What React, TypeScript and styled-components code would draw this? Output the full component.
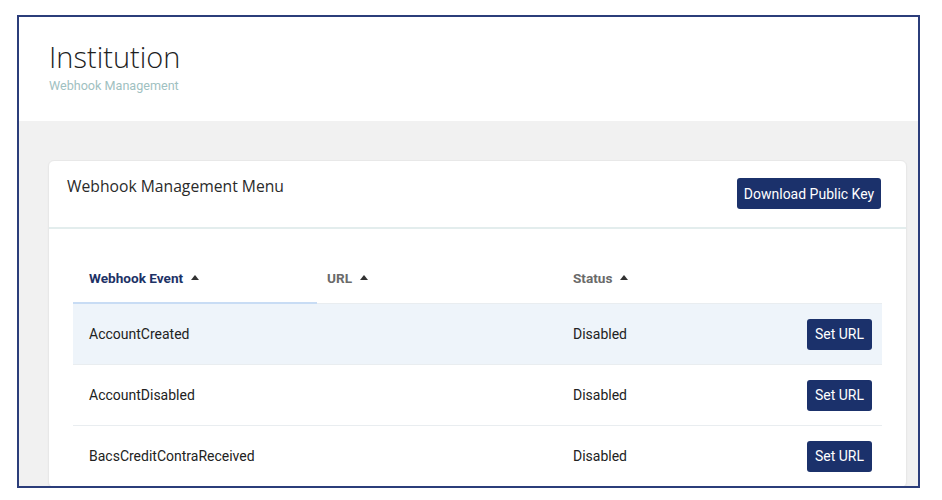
import React from "react";
import styled, { createGlobalStyle } from "styled-components";

const Global = createGlobalStyle`
  html, body { margin: 0; padding: 0; background: #ffffff; }
  body { font-family: Roboto, "Liberation Sans", Arial, sans-serif; }
  * { box-sizing: border-box; }
`;

const Frame = styled.div`
  margin: 15px 0 0 17px;
  width: 903px;
  height: 473px;
  border: 2px solid #2b3d7a;
  overflow: hidden;
  display: flex;
  flex-direction: column;
  background: #f1f1f1;
`;

const Header = styled.header`
  background: #ffffff;
  height: 104px;
  padding: 22px 0 0 30px;
  flex-shrink: 0;
`;

const Title = styled.h1`
  margin: 0;
  font-family: "Open Sans", sans-serif;
  font-weight: 300;
  font-size: 29px;
  line-height: 36px;
  color: #1f1f1f;
`;

const Subtitle = styled.div`
  margin-top: 3px;
  font-family: Roboto, sans-serif;
  font-size: 12.6px;
  color: #9fc1c1;
`;

const Content = styled.main`
  flex: 1;
  padding: 39px 11px 0 29px;
`;

const Card = styled.section`
  background: #ffffff;
  border-radius: 6px;
  border: 1px solid #e8e8e8;
  box-shadow: 0 1px 2px rgba(0, 0, 0, 0.04);
`;

const CardHeader = styled.div`
  display: flex;
  justify-content: space-between;
  align-items: flex-start;
  padding: 17px 25px 17px 18px;
  border-bottom: 2px solid #e3eded;
  height: 68px;
`;

const CardTitle = styled.h2`
  margin: 0;
  margin-top: -1px;
  font-family: "Open Sans", sans-serif;
  font-weight: 400;
  font-size: 15.7px;
  line-height: 18px;
  color: #2a2a2a;
`;

const NavyButton = styled.button<{ $w?: number }>`
  height: 31px;
  padding: 0 ${(p) => (p.$w ? 0 : 9)}px;
  width: ${(p) => (p.$w ? `${p.$w}px` : "auto")};
  border: none;
  border-radius: 3px;
  background: #1b316b;
  color: #ffffff;
  font-family: Roboto, sans-serif;
  font-size: 14px;
  cursor: pointer;
`;

const TableWrap = styled.div`
  padding: 24px 24px 0 24px;
`;

const Row = styled.div<{ $head?: boolean; $highlight?: boolean }>`
  display: grid;
  grid-template-columns: 244px 246px 1fr auto;
  align-items: center;
  height: ${(p) => (p.$head ? 51 : 61)}px;
  background: ${(p) => (p.$highlight ? "#eef4fa" : "transparent")};
  border-bottom: 1px solid #e9edf0;
`;

const HeadCell = styled.div<{ $active?: boolean; $first?: boolean }>`
  height: 100%;
  display: flex;
  align-items: center;
  gap: 8px;
  padding-left: ${(p) => (p.$first ? 16 : 10)}px;
  padding-top: 1px;
  font-family: Roboto, sans-serif;
  font-weight: 700;
  font-size: 13.6px;
  color: ${(p) => (p.$active ? "#1d3266" : "#6a6a6a")};
  border-bottom: 2px solid ${(p) => (p.$active ? "#c8dcf4" : "transparent")};
  margin-bottom: -1px;
`;

const SortArrow = styled.span`
  width: 0;
  height: 0;
  border-left: 4px solid transparent;
  border-right: 4px solid transparent;
  border-bottom: 5px solid #333;
  margin-top: -1px;
`;

const Cell = styled.div<{ $first?: boolean; $right?: boolean }>`
  padding-left: ${(p) => (p.$first ? 16 : 10)}px;
  padding-right: ${(p) => (p.$right ? 10 : 0)}px;
  font-family: Roboto, sans-serif;
  font-size: 14px;
  color: #222222;
  display: flex;
  justify-content: ${(p) => (p.$right ? "flex-end" : "flex-start")};
`;

const events = [
  { name: "AccountCreated", status: "Disabled" },
  { name: "AccountDisabled", status: "Disabled" },
  { name: "BacsCreditContraReceived", status: "Disabled" },
];

export default function App() {
  return (
    <>
      <Global />
      <Frame>
        <Header>
          <Title>Institution</Title>
          <Subtitle>Webhook Management</Subtitle>
        </Header>
        <Content>
          <Card>
            <CardHeader>
              <CardTitle>Webhook Management Menu</CardTitle>
              <NavyButton $w={144}>Download Public Key</NavyButton>
            </CardHeader>
            <TableWrap>
              <Row $head>
                <HeadCell $first $active>
                  Webhook Event <SortArrow />
                </HeadCell>
                <HeadCell>
                  URL <SortArrow />
                </HeadCell>
                <HeadCell>
                  Status <SortArrow />
                </HeadCell>
                <HeadCell />
              </Row>
              {events.map((e, i) => (
                <Row key={e.name} $highlight={i === 0}>
                  <Cell $first>{e.name}</Cell>
                  <Cell />
                  <Cell>{e.status}</Cell>
                  <Cell $right>
                    <NavyButton $w={65}>Set URL</NavyButton>
                  </Cell>
                </Row>
              ))}
            </TableWrap>
          </Card>
        </Content>
      </Frame>
    </>
  );
}
